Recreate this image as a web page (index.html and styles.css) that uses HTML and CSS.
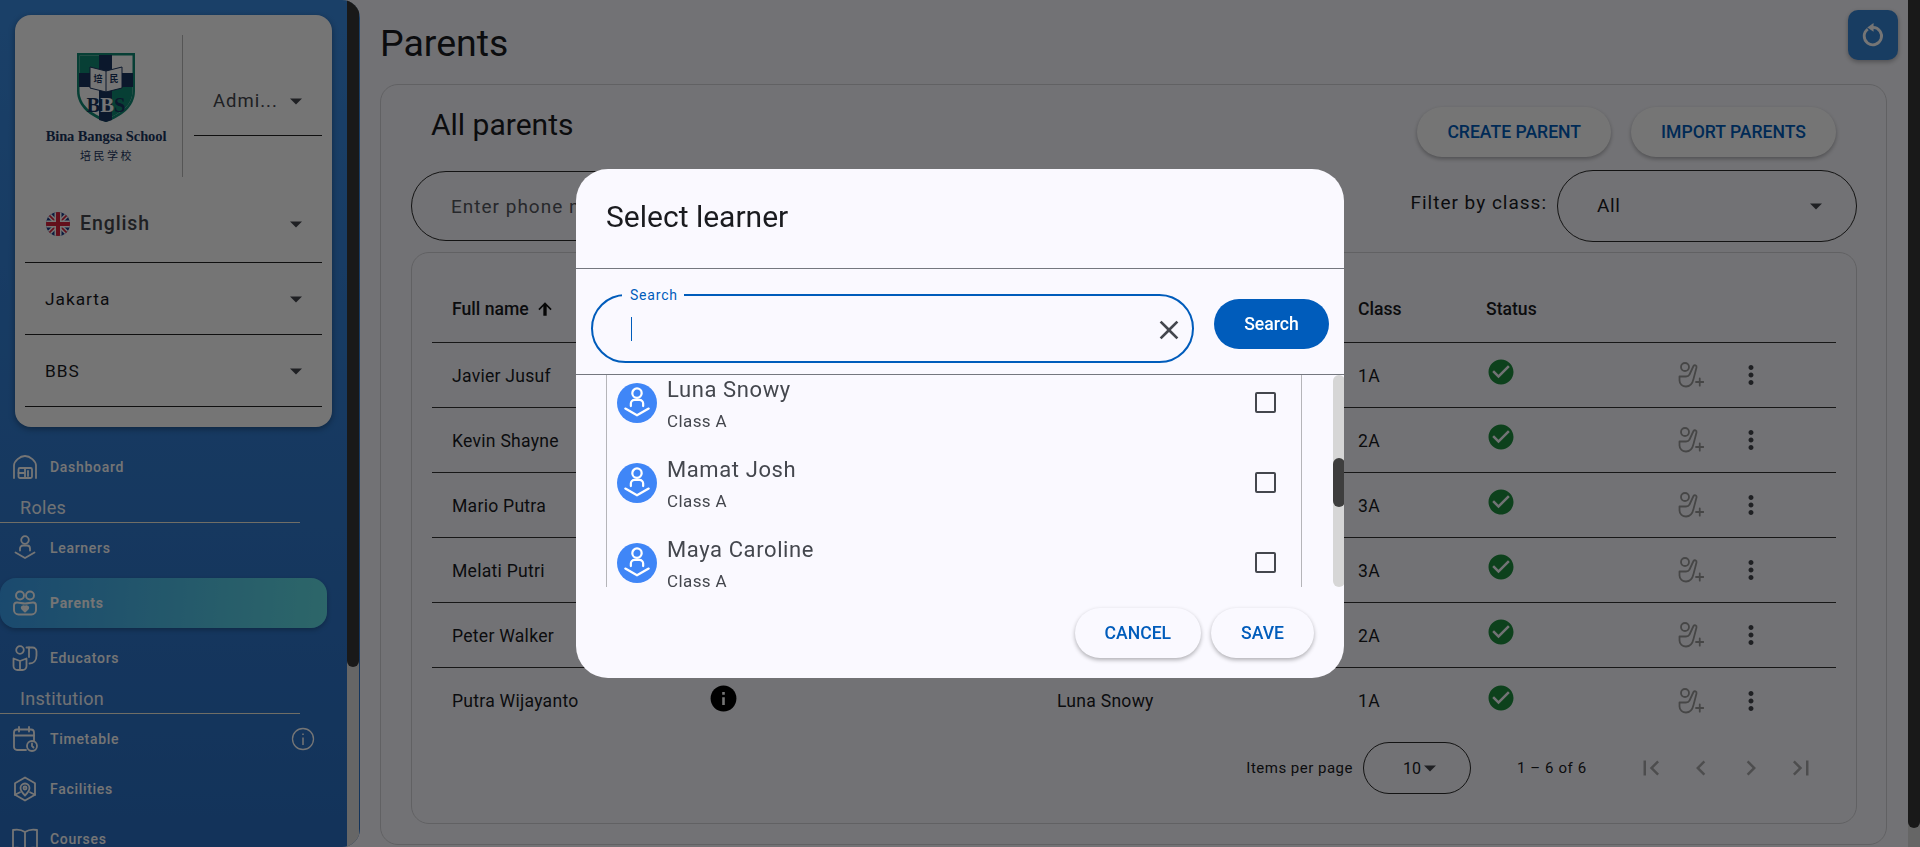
FILE: index.html
```html
<!DOCTYPE html>
<html lang="en">
<head>
<meta charset="utf-8">
<title>Parents</title>
<link rel="stylesheet" href="styles.css">
</head>
<body>
<svg class="defs" aria-hidden="true">
  <defs>
    <symbol id="i-drop" viewBox="0 0 24 24"><path d="M6 9.5l6 6 6-6z"/></symbol>
    <symbol id="i-check" viewBox="0 0 24 24"><path fill-rule="evenodd" d="M12 2C6.48 2 2 6.48 2 12s4.48 10 10 10 10-4.48 10-10S17.52 2 12 2zm-2 15l-5-5 1.41-1.41L10 14.17l7.59-7.59L19 8l-9 9z"/></symbol>
    <symbol id="i-more" viewBox="0 0 24 24"><path d="M12 8c1.1 0 2-.9 2-2s-.9-2-2-2-2 .9-2 2 .9 2 2 2zm0 2c-1.1 0-2 .9-2 2s.9 2 2 2 2-.9 2-2-.9-2-2-2zm0 6c-1.1 0-2 .9-2 2s.9 2 2 2 2-.9 2-2-.9-2-2-2z"/></symbol>
    <symbol id="i-add" viewBox="0 0 26 26"><g fill="none" stroke="currentColor" stroke-width="1.800" stroke-linecap="round" stroke-linejoin="round"><circle cx="7" cy="5" r="4"/><path d="M1.500 14.500H8C10 14.500 11 13.500 11.500 12.500L15.500 4C16.500 2.500 19 3.500 18.500 5.500L15.500 17C14.500 21.500 12 24.500 8 24.500 4.500 24.500 1.500 22 1.500 18.500z"/><path d="M18 20h7.500M21.750 16.300v7.400"/></g></symbol>
    <symbol id="i-learner" viewBox="0 0 26 26"><g fill="none" stroke="currentColor" stroke-width="1.800" stroke-linecap="round" stroke-linejoin="round"><circle cx="13" cy="5" r="3.800"/><path d="M8 15.500v-2a3 3 0 0 1 3-3h4a3 3 0 0 1 3 3v2"/><path d="M3.500 17.500L13 23l9.500-5.500"/></g></symbol>
  </defs>
</svg>

<div class="app">
  <aside class="sidebar">
    <div class="side-col">
      <div class="side-card">
        <div class="brand-row">
          <div class="brand">
            <svg class="shield" viewBox="0 0 60 71">
              <path d="M1 1h58v38c0 16-14 26-29 31C15 65 1 55 1 39z" fill="#118a74"/>
              <path d="M3.500 3.500h53v35.500c0 14-12 23-26.500 28C16 62 3.500 53 3.500 39z" fill="#fff"/>
              <path d="M3.500 3.500H24v25H3.500z" fill="#118a74"/>
              <path d="M36 35h20.500v4c0 14-12 23-26.500 28V35z" fill="#118a74"/>
              <path d="M23 3h13v18h21v14H36v33l-6 2-7-2V35H3V21h20z" fill="#1a3560"/>
              <path d="M14 15l16 4 16-4v21l-16 4-16-4z" fill="#fff" stroke="#1a3560"/>
              <path d="M30 19v21" stroke="#1a3560"/>
              <text class="shield-cjk" x="17.500" y="30">培</text>
              <text class="shield-cjk" x="33.500" y="30">民</text>
              <text class="shield-bbs" x="30" y="60" text-anchor="middle">B<tspan class="shield-mid">B</tspan>S</text>
            </svg>
            <div class="brand-name">Bina Bangsa School</div>
            <div class="brand-cjk">培民学校</div>
          </div>
          <div class="select select-role"><span class="select-text">Admi...</span><svg class="drop"><use href="#i-drop"/></svg></div>
        </div>
        <div class="select select-lang">
          <svg class="flag" viewBox="0 0 24 24">
            <defs><clipPath id="flag-clip"><circle cx="12" cy="12" r="12"/></clipPath></defs>
            <g clip-path="url(#flag-clip)">
              <rect width="24" height="24" fill="#1f3d8a"/>
              <path d="M0 0l24 24M24 0L0 24" stroke="#fff" stroke-width="4.500"/>
              <path d="M0 0l24 24M24 0L0 24" stroke="#d8213b" stroke-width="1.600"/>
              <path d="M12 0v24M0 12h24" stroke="#fff" stroke-width="7"/>
              <path d="M12 0v24M0 12h24" stroke="#d8213b" stroke-width="4"/>
            </g>
          </svg>
          <span class="select-text lang-text">English</span><svg class="drop"><use href="#i-drop"/></svg>
        </div>
        <div class="select select-plain"><span class="select-text">Jakarta</span><svg class="drop"><use href="#i-drop"/></svg></div>
        <div class="select select-plain"><span class="select-text">BBS</span><svg class="drop"><use href="#i-drop"/></svg></div>
      </div>

      <nav class="nav">
        <a class="nav-item">
          <svg class="nav-icon" viewBox="0 0 26 26"><g fill="none" stroke="currentColor" stroke-width="1.800" stroke-linejoin="round" stroke-linecap="round"><path d="M2 24V11.500C2 7 8 2 13 2s11 5 11 9.500V24"/><rect x="6.500" y="14" width="13.500" height="10" rx="1.500"/><path d="M13 14v10M6.500 19H13M16 17v5"/></g></svg>
          <span>Dashboard</span>
        </a>
        <div class="nav-section">Roles</div>
        <a class="nav-item">
          <svg class="nav-icon"><use href="#i-learner"/></svg>
          <span>Learners</span>
        </a>
        <a class="nav-item active">
          <svg class="nav-icon" viewBox="0 0 26 26"><g fill="none" stroke="currentColor" stroke-width="1.900" stroke-linejoin="round" stroke-linecap="round"><circle cx="8" cy="5.500" r="4"/><circle cx="18" cy="5.500" r="4"/><path d="M2 15.500c0-2 1.500-3 3-3 3 0 5 1 8 1s5-1 8-1c1.500 0 3 1 3 3V20a4.500 4.500 0 0 1-4.500 4.500H6.500A4.500 4.500 0 0 1 2 20z"/><path d="M13 21.500l-3-3c-1-1.500 1.500-3 3-1.500 1.500-1.500 4-0 3 1.500z" fill="currentColor"/></g></svg>
          <span>Parents</span>
        </a>
        <a class="nav-item">
          <svg class="nav-icon" viewBox="0 0 26 26"><g fill="none" stroke="currentColor" stroke-width="1.800" stroke-linejoin="round" stroke-linecap="round"><circle cx="8" cy="5" r="3.800"/><path d="M1.500 13.500L8 16l6.500-2.500V21a4 4 0 0 1-4 4h-5a4 4 0 0 1-4-4zM8 16v9"/><path d="M14.500 2.500h6a4 4 0 0 1 4 4v4c0 5-3 8-7 8"/><path d="M17 2.500V12"/></g></svg>
          <span>Educators</span>
        </a>
        <div class="nav-section">Institution</div>
        <a class="nav-item">
          <svg class="nav-icon" viewBox="0 0 26 26"><g fill="none" stroke="currentColor" stroke-width="1.800" stroke-linejoin="round" stroke-linecap="round"><path d="M14 24H5a3 3 0 0 1-3-3V6.500a3 3 0 0 1 3-3h14a3 3 0 0 1 3 3v8"/><path d="M2 9.500h20M7 1v4.500M17 1v4.500"/><circle cx="20" cy="20" r="5"/><path d="M20 17.500V20l1.500 1.500"/></g></svg>
          <span>Timetable</span>
          <svg class="nav-info" viewBox="0 0 24 24"><circle cx="12" cy="12" r="10.500" fill="none" stroke="currentColor" stroke-width="1.300"/><path d="M12 10.500V18M12 6.500v1.500" stroke="currentColor" stroke-width="1.500" fill="none"/></svg>
        </a>
        <a class="nav-item">
          <svg class="nav-icon" viewBox="0 0 26 26"><g fill="none" stroke="currentColor" stroke-width="1.800" stroke-linejoin="round" stroke-linecap="round"><path d="M13 1.500l10 5.750v11.500L13 24.500 3 18.750V7.250z"/><path d="M13 19.500c-2.500-2.500-4.500-5-4.500-7.500a4.500 4.500 0 0 1 9 0c0 2.500-2 5-4.500 7.500z"/><circle cx="13" cy="12" r="1.500"/><path d="M3 18.750l5-2.500M23 18.750l-5-2.500"/></g></svg>
          <span>Facilities</span>
        </a>
        <a class="nav-item">
          <svg class="nav-icon" viewBox="0 0 26 26"><g fill="none" stroke="currentColor" stroke-width="1.800" stroke-linejoin="round"><path d="M1 4c5-1 9 0 12 2 3-2 7-3 12-2v18c-5-1-9 0-12 2-3-2-7-3-12-2zM13 6v18"/></g></svg>
          <span>Courses</span>
        </a>
      </nav>
    </div>
    <div class="rail side-rail"><div class="thumb"></div></div>
  </aside>

  <main class="main">
    <header class="page-head">
      <h1>Parents</h1>
      <button class="refresh" aria-label="Refresh">
        <svg viewBox="0 0 24 24"><g fill="none" stroke="currentColor" stroke-width="2.600"><path d="M7.200 6.500a8 8 0 1 0 4.800-1.500"/></g><path d="M12.500 1v8L6.700 5z" fill="currentColor"/></svg>
      </button>
    </header>

    <section class="card">
      <div class="card-head">
        <h2>All parents</h2>
        <div class="card-actions">
          <button class="pill-btn">CREATE PARENT</button>
          <button class="pill-btn">IMPORT PARENTS</button>
        </div>
      </div>

      <div class="filters">
        <div class="phone-field">Enter phone number</div>
        <div class="class-filter">
          <span class="filter-label">Filter by class:</span>
          <div class="filter-select"><span>All</span><svg class="drop"><use href="#i-drop"/></svg></div>
        </div>
      </div>

      <div class="table-card">
        <div class="t-row t-head">
          <div class="cell name-cell">Full name <svg class="sort" viewBox="0 0 24 24"><path d="M4 12l1.410 1.410L10 8.830V20h4V8.830l4.590 4.580L20 12l-8-8-8 8z"/></svg></div>
          <div class="cell"></div>
          <div class="cell"></div>
          <div class="cell">Class</div>
          <div class="cell">Status</div>
          <div></div><div></div>
        </div>

        <div class="t-row">
          <div class="cell">Javier Jusuf</div><div></div><div></div><div class="cell">1A</div>
          <div class="cell"><svg class="ok"><use href="#i-check"/></svg></div>
          <svg class="add"><use href="#i-add"/></svg><svg class="more"><use href="#i-more"/></svg>
        </div>
        <div class="t-row">
          <div class="cell">Kevin Shayne</div><div></div><div></div><div class="cell">2A</div>
          <div class="cell"><svg class="ok"><use href="#i-check"/></svg></div>
          <svg class="add"><use href="#i-add"/></svg><svg class="more"><use href="#i-more"/></svg>
        </div>
        <div class="t-row">
          <div class="cell">Mario Putra</div><div></div><div></div><div class="cell">3A</div>
          <div class="cell"><svg class="ok"><use href="#i-check"/></svg></div>
          <svg class="add"><use href="#i-add"/></svg><svg class="more"><use href="#i-more"/></svg>
        </div>
        <div class="t-row">
          <div class="cell">Melati Putri</div><div></div><div></div><div class="cell">3A</div>
          <div class="cell"><svg class="ok"><use href="#i-check"/></svg></div>
          <svg class="add"><use href="#i-add"/></svg><svg class="more"><use href="#i-more"/></svg>
        </div>
        <div class="t-row">
          <div class="cell">Peter Walker</div><div></div><div></div><div class="cell">2A</div>
          <div class="cell"><svg class="ok"><use href="#i-check"/></svg></div>
          <svg class="add"><use href="#i-add"/></svg><svg class="more"><use href="#i-more"/></svg>
        </div>
        <div class="t-row t-last">
          <div class="cell">Putra Wijayanto</div>
          <div class="cell"><svg class="info-dot" viewBox="0 0 24 24"><circle cx="12" cy="12" r="10"/><path class="info-i" d="M11 11h2v6h-2zM11 7h2v2h-2z"/></svg></div>
          <div class="cell">Luna Snowy</div><div class="cell">1A</div>
          <div class="cell"><svg class="ok"><use href="#i-check"/></svg></div>
          <svg class="add"><use href="#i-add"/></svg><svg class="more"><use href="#i-more"/></svg>
        </div>

        <div class="pager">
          <span class="pager-label">Items per page</span>
          <div class="pager-select"><span>10</span><svg class="drop"><use href="#i-drop"/></svg></div>
          <span class="pager-range">1 – 6 of 6</span>
          <div class="pager-nav">
            <svg viewBox="0 0 24 24"><path d="M18.410 16.590L13.820 12l4.590-4.590L17 6l-6 6 6 6zM6 6h2v12H6z"/></svg>
            <svg viewBox="0 0 24 24"><path d="M15.410 7.410L14 6l-6 6 6 6 1.410-1.410L10.830 12z"/></svg>
            <svg viewBox="0 0 24 24"><path d="M10 6L8.590 7.410 13.170 12l-4.580 4.590L10 18l6-6z"/></svg>
            <svg viewBox="0 0 24 24"><path d="M5.590 7.410L10.180 12l-4.590 4.590L7 18l6-6-6-6zM16 6h2v12h-2z"/></svg>
          </div>
        </div>
      </div>
    </section>
  </main>
  <div class="rail main-rail"><div class="thumb"></div></div>
</div>

<div class="scrim"></div>

<div class="dialog" role="dialog">
  <h3>Select learner</h3>
  <div class="dialog-search">
    <div class="search-field">
      <span class="search-label">Search</span>
      <span class="caret"></span>
      <svg class="clear" viewBox="0 0 24 24"><path d="M19 6.410L17.590 5 12 10.590 6.410 5 5 6.410 10.590 12 5 17.590 6.410 19 12 13.410 17.590 19 19 17.590 13.410 12z"/></svg>
    </div>
    <button class="search-btn">Search</button>
  </div>
  <div class="dialog-list-wrap">
    <div class="dialog-list">
      <div class="learner">
        <span class="avatar"><svg><use href="#i-learner"/></svg></span>
        <div class="learner-text"><div class="learner-name">Luna Snowy</div><div class="learner-class">Class A</div></div>
        <span class="checkbox"></span>
      </div>
      <div class="learner">
        <span class="avatar"><svg><use href="#i-learner"/></svg></span>
        <div class="learner-text"><div class="learner-name">Mamat Josh</div><div class="learner-class">Class A</div></div>
        <span class="checkbox"></span>
      </div>
      <div class="learner">
        <span class="avatar"><svg><use href="#i-learner"/></svg></span>
        <div class="learner-text"><div class="learner-name">Maya Caroline</div><div class="learner-class">Class A</div></div>
        <span class="checkbox"></span>
      </div>
    </div>
    <div class="list-rail"><div class="list-thumb"></div></div>
  </div>
  <div class="dialog-actions">
    <button class="action-btn">CANCEL</button>
    <button class="action-btn">SAVE</button>
  </div>
</div>
</body>
</html>
```

FILE: styles.css
```css
* { box-sizing: border-box; }
html, body { margin: 0; height: 100%; overflow: hidden; }
body { font-family: Roboto, "Liberation Sans", "Noto Sans CJK SC", sans-serif; background: #f9f9ff; color: #1a1b1f; }
.defs { width: 0; height: 0; position: absolute; }
button { font-family: inherit; border: 0; cursor: pointer; }
h1, h2, h3 { margin: 0; font-weight: 400; }

.app { display: flex; height: 847px; }

/* sidebar */
.sidebar { width: 360px; flex: none; display: flex; height: 847px; overflow: hidden; background: linear-gradient(180deg, #3a8ce3 0%, #2a6fc4 100%); border-radius: 0 18px 18px 0; padding-right: 1px; }
.side-col { width: 347px; flex: none; height: 847px; }
.rail { width: 12px; flex: none; height: 847px; background: #dedede; }
.thumb { background: #383838; border-radius: 0 0 6px 6px; }
.side-rail .thumb { height: 667px; }
.main-rail .thumb { height: 828px; }

.side-card { margin: 15px 15px 0; width: 317px; height: 412px; padding: 20px 10px 0; background: #fff; border-radius: 16px; box-shadow: 0 2px 6px rgba(0,0,0,.35); }
.brand-row { display: flex; height: 142px; margin-bottom: 8px; align-items: flex-start; }
.brand { width: 158px; height: 142px; flex: none; border-right: 1px solid #b9b9b9; display: flex; flex-direction: column; align-items: center; padding-top: 17px; padding-left: 5px; }
.shield { width: 60px; height: 71px; flex: none; }
.shield-cjk { font: 700 9px "Noto Sans CJK SC", sans-serif; fill: #1a3560; }
.shield-bbs { font: 700 20.500px "Liberation Serif", serif; fill: #1a3560; }
.shield-mid { fill: #fff; }
.brand-name { font: 700 14.500px/16px "Liberation Serif", serif; color: #1a3560; white-space: nowrap; margin-top: 5px; letter-spacing: -.1px; }
.brand-cjk { font: 400 11px/14px "Noto Sans CJK SC", sans-serif; color: #1a3560; letter-spacing: 2.500px; margin-top: 4px; padding-left: 2px; }

.select { display: flex; align-items: center; border-bottom: 1px solid #222; font-size: 17.300px; letter-spacing: 1px; color: #44474e; }
.select-text { flex: 1; white-space: nowrap; }
.drop { width: 24px; height: 24px; flex: none; fill: #44474e; }
.select-role { width: 128px; height: 69px; margin: 32px 0 0 11px; padding: 0 14px 0 19px; font-size: 18.500px; }
.select-lang { height: 78px; padding: 0 14px 0 21px; }
.flag { width: 24px; height: 24px; margin-right: 10px; flex: none; }
.lang-text { font-size: 19.500px; font-weight: 500; letter-spacing: .9px; }
.select-plain { height: 72px; padding: 0 14px 0 20px; color: #1a1b1f; }

.nav { margin-top: 15px; color: #fff; }
.nav-item { display: flex; align-items: center; height: 50px; padding-left: 12px; font-size: 14px; font-weight: 500; letter-spacing: .7px; }
.nav-item.active { width: 327px; margin: 5px 0; border-radius: 16px; background: linear-gradient(95deg, #3aa0f0 0%, #62dfe4 100%); box-shadow: 0 2px 5px rgba(0,0,0,.25); font-weight: 700; }
.nav-icon { width: 26px; height: 26px; flex: none; margin-right: 12px; color: #fff; }
.nav-info { margin-left: auto; margin-right: 20px; width: 24px; height: 24px; }
.nav-item:has(.nav-info) { width: 335px; }
.nav-section { width: 300px; height: 31px; padding: 5px 0 0 20px; border-bottom: 1px solid #fff6e0; font-size: 18px; line-height: 22px; letter-spacing: .3px; opacity: .95; }

/* main */
.main { flex: 1; min-width: 0; padding: 0 21px 0 20px; }
.page-head { height: 84px; display: flex; justify-content: space-between; align-items: flex-start; }
h1 { font-size: 37.500px; line-height: 44px; margin-top: 21px; }
.refresh { width: 50px; height: 50px; margin: 10px -11px 0 0; border-radius: 10px; background: #3585d6; color: #fff; padding: 12px; box-shadow: 0 2px 5px rgba(0,0,0,.3); }
.refresh svg { width: 26px; height: 26px; display: block; }

.card { height: 761px; border: 1px solid #d3d3d8; border-radius: 18px; padding: 22px 29px 0 30px; }
.card-head { display: flex; justify-content: space-between; padding: 0 21px 0 20px; }
h2 { font-size: 30px; line-height: 36px; }
.card-actions { display: flex; gap: 20px; }
.pill-btn { height: 50px; padding: 0 30px; border-radius: 25px; background: #fff; color: #005cbb; font-size: 17.600px; font-weight: 500; box-shadow: 0 2px 4px rgba(0,0,0,.3); }

.filters { display: flex; justify-content: space-between; align-items: flex-start; margin-top: 13px; }
.phone-field { width: 880px; height: 70px; margin-top: 1px; border: 1px solid #2a2a2a; border-radius: 35px; padding: 1px 39px 0; display: flex; align-items: center; font-size: 19px; letter-spacing: 1px; color: #55585f; white-space: nowrap; }
.class-filter { display: flex; }
.filter-label { font-size: 19px; letter-spacing: 1px; margin: 21px 10px 0 0; color: #1a1b1f; }
.filter-select { width: 300px; height: 72px; border: 1px solid #2a2a2a; border-radius: 36px; padding: 0 28px 2px 39px; display: flex; align-items: center; justify-content: space-between; font-size: 19px; letter-spacing: .6px; }
.filter-select .drop { margin-top: 2px; }

.table-card { height: 572px; margin-top: 10px; border: 1px solid #d3d3d8; border-radius: 18px; padding: 0 20px; }
.t-row { display: grid; grid-template-columns: 257px 348px 301px 128px 212px 61px 1fr; align-items: center; height: 65px; border-bottom: 1px solid #333; font-size: 17.600px; letter-spacing: .25px; }
.t-head { height: 90px; padding-top: 21px; font-weight: 500; letter-spacing: 0; }
.t-last { border-bottom: 0; height: 66px; }
.cell { padding: 2px 0 0 20px; display: flex; align-items: center; white-space: nowrap; }
.t-last .cell { padding-top: 0; }
.name-cell { gap: 6px; }
.sort { width: 20px; height: 20px; fill: #111; }
.ok { width: 30px; height: 30px; fill: #1e8e3e; display: block; margin: -8px 0 0 -20px; transform: translateX(20px); }
.t-last .ok { margin-top: -6px; }
.add { width: 26px; height: 26px; color: #9a9a9a; }
.more { width: 30px; height: 30px; fill: #44474e; transform: translateX(-3px); }
.info-dot { width: 31px; height: 31px; margin: -6px 0 0 -1px; }
.info-i { fill: #fff; }

.pager { display: flex; align-items: center; margin-top: 8px; justify-content: flex-end; padding-right: 20px; }
.pager-label { font-size: 15px; letter-spacing: .5px; margin-right: 10px; }
.pager-select { width: 108px; height: 52px; border: 1px solid #2a2a2a; border-radius: 26px; display: flex; align-items: center; padding-left: 39px; font-size: 16px; }
.pager-select .drop { margin-left: -3px; }
.pager-range { margin-left: 46px; font-size: 15px; letter-spacing: .6px; width: 119px; }
.pager-nav { display: flex; gap: 20px; }
.pager-nav svg { width: 30px; height: 30px; fill: #a9a9ab; }

/* overlay */
.scrim { position: fixed; inset: 0; background: rgba(0,0,0,.54); }
.dialog { position: fixed; left: 576px; top: 169px; width: 768px; height: 509px; background: #faf9ff; border-radius: 32px; overflow: hidden; }
h3 { font-size: 30px; line-height: 36px; padding: 30px 30px 0; height: 100px; border-bottom: 1px solid #74777f; color: #1a1b1f; }
.dialog-search { height: 106px; border-bottom: 1px solid #74777f; display: flex; align-items: flex-start; padding: 25px 0 0 15px; }
.search-field { position: relative; width: 603px; height: 69px; border: 2px solid #005cbb; border-radius: 35px; }
.search-label { position: absolute; left: 29px; top: -9px; padding: 0 6px 0 8px; background: #faf9ff; color: #005cbb; font-size: 14px; line-height: 16px; letter-spacing: .8px; }
.caret { position: absolute; left: 38px; top: 21px; width: 1px; height: 24px; background: #005cbb; }
.clear { position: absolute; right: 7px; top: 18px; width: 32px; height: 32px; fill: #44474e; }
.search-btn { width: 115px; height: 50px; margin: 5px 0 0 20px; border-radius: 25px; background: #005cbb; color: #fff; font-size: 17.600px; font-weight: 500; }

.dialog-list-wrap { display: flex; height: 212px; padding-left: 30px; }
.dialog-list { width: 696px; height: 212px; overflow: hidden; border-left: 1px solid #b5b5b9; border-right: 1px solid #b5b5b9; flex: none; padding-top: 1px; }
.learner { display: flex; height: 80px; padding: 0 25px 0 10px; }
.avatar { width: 40px; height: 40px; margin-top: 7px; border-radius: 50%; background: #3f86f7; color: #fff; flex: none; display: flex; align-items: center; justify-content: center; }
.avatar svg { width: 32px; height: 32px; }
.learner-text { flex: 1; padding-left: 10px; }
.learner-name { font-size: 22px; line-height: 28px; color: #44474e; letter-spacing: .6px; }
.learner-class { font-size: 17px; line-height: 20px; color: #44474e; letter-spacing: .4px; margin-top: 7px; }
.checkbox { width: 21px; height: 21px; margin-top: 16px; border: 2px solid #44474e; border-radius: 2px; flex: none; }
.list-rail { width: 12px; height: 212px; margin-left: 31px; background: #d6d6d6; border-radius: 6px; flex: none; }
.list-thumb { height: 49px; margin-top: 83px; background: #3e3e3e; border-radius: 6px; }

.dialog-actions { display: flex; justify-content: flex-end; gap: 10px; padding: 21px 30px 0 0; }
.action-btn { height: 50px; padding: 0 30px; border-radius: 25px; background: #faf9ff; color: #005cbb; font-size: 17.600px; font-weight: 500; box-shadow: 0 2px 4px rgba(0,0,0,.3); }
```
